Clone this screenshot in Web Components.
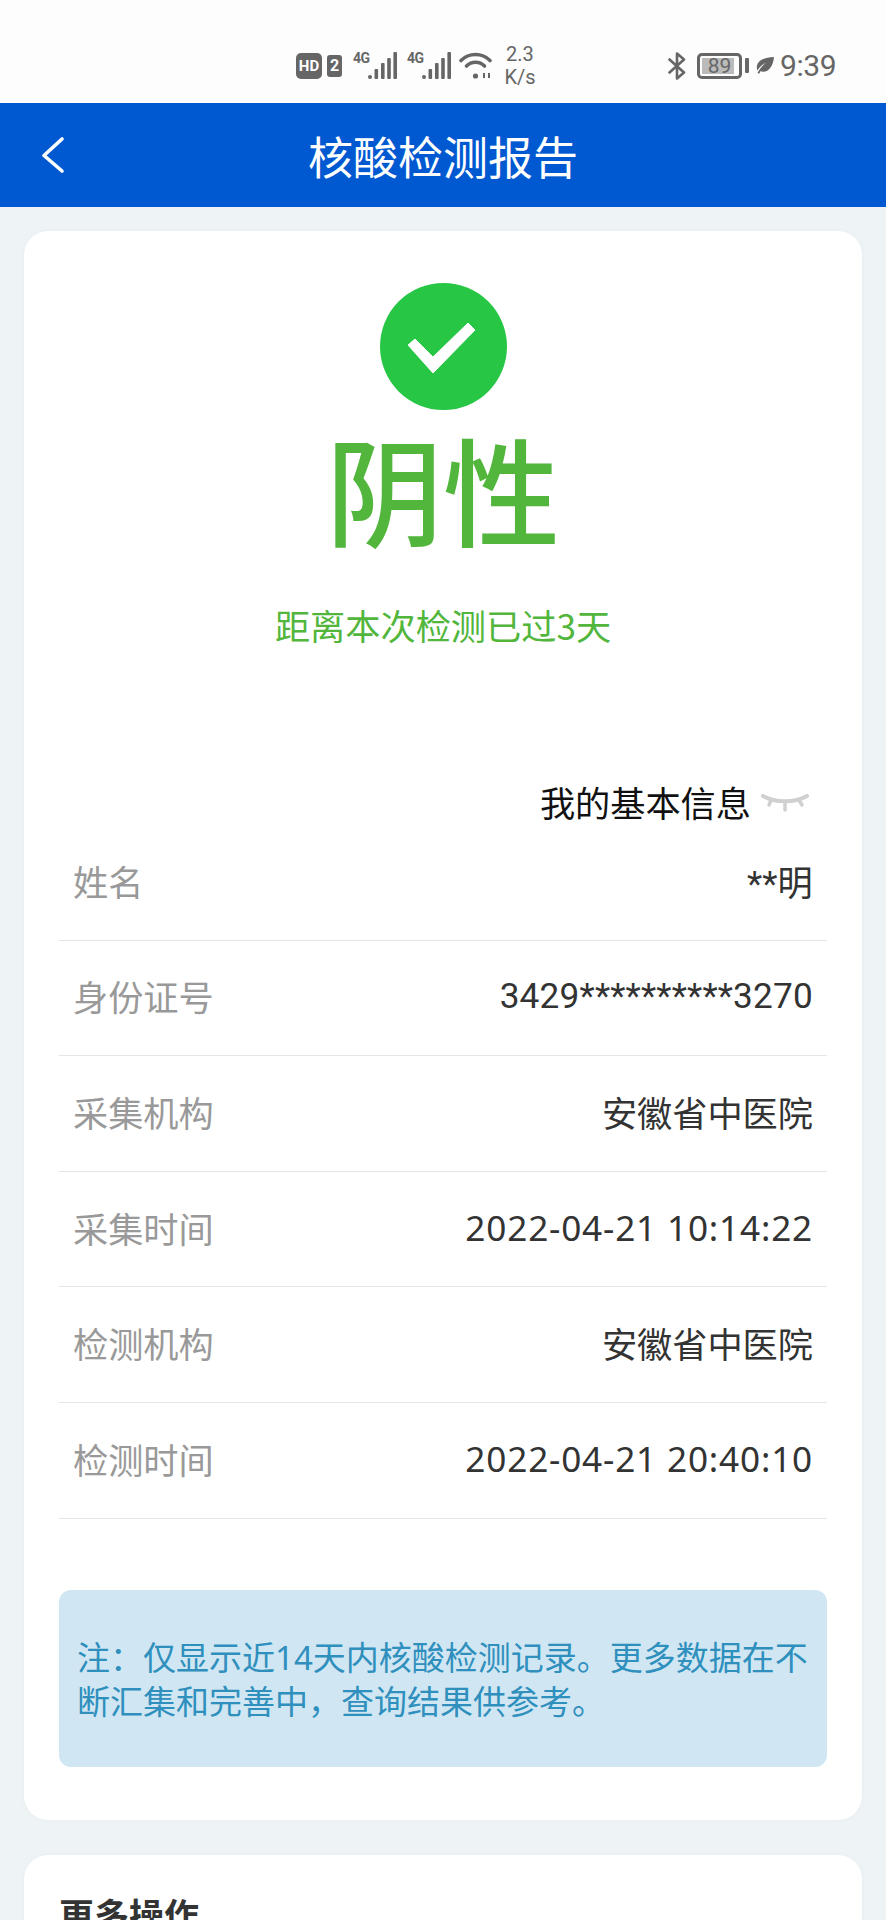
<!DOCTYPE html>
<html lang="zh-CN">
<head>
<meta charset="utf-8">
<title>核酸检测报告</title>
<style>
    html, body { margin: 0; height: 1920px; overflow: hidden; }
    body {
        background: #eef3f6;
        font-family: "Noto Sans", "Noto Sans CJK SC", sans-serif;
    }
    main { display: block; box-sizing: border-box; height: 1713px; padding: 24px 24px 0; overflow: hidden; }
</style>
</head>
<body>
<status-bar></status-bar>
<app-header>核酸检测报告</app-header>
<main>
    <content-card>
        <result-panel since="距离本次检测已过3天">阴性</result-panel>
        <info-toggle>我的基本信息</info-toggle>
        <info-row label="姓名" narrow>**明</info-row>
        <info-row label="身份证号" narrow>3429**********3270</info-row>
        <info-row label="采集机构">安徽省中医院</info-row>
        <info-row label="采集时间" spaced>2022-04-21 10:14:22</info-row>
        <info-row label="检测机构">安徽省中医院</info-row>
        <info-row label="检测时间" spaced>2022-04-21 20:40:10</info-row>
        <note-box>注：仅显示近14天内核酸检测记录。更多数据在不断汇集和完善中，查询结果供参考。</note-box>
    </content-card>
    <content-card heading="更多操作"></content-card>
</main>

<script>
class StatusBar extends HTMLElement {
    constructor() {
        super();
        this.attachShadow({ mode: 'open' });
        const bars = `<svg class="bars" width="29" height="27" viewBox="0 0 29 27" fill="#666">
            <circle cx="2" cy="25" r="2"/><rect x="6.5" y="17" width="3.6" height="10" rx="1"/>
            <rect x="13" y="11" width="3.6" height="16" rx="1"/><rect x="19.2" y="6" width="3.6" height="21" rx="1"/>
            <rect x="25.4" y="0" width="3.6" height="27" rx="1"/></svg>`;
        this.shadowRoot.innerHTML = `
            <style>
                :host { display: flex; align-items: center; box-sizing: border-box; height: 103px; padding: 28px 0 0 296px; background: #fdfdfd; color: #666; font-family: "Roboto", sans-serif; }
                .hd { width: 26px; height: 26px; border-radius: 5px; background: #666; color: #fff; font: 700 15px/26px "Roboto", sans-serif; text-align: center; }
                .sim { width: 15px; height: 22px; margin-left: 5px; border-radius: 3px; background: #666; color: #fff; font: 700 16px/22px "Roboto", sans-serif; text-align: center; }
                .net { display: flex; height: 27px; }
                .net span { width: 15px; font: 700 14px/12px "Roboto", sans-serif; letter-spacing: -.5px; white-space: nowrap; }
                .first { margin-left: 11px; }
                .second { margin-left: 10px; }
                .wifi { margin-left: 8px; }
                .speed { width: 32px; margin-left: 12px; font-size: 20px; line-height: 23px; text-align: center; }
                .bt { margin-left: 132px; }
                .battery { position: relative; box-sizing: border-box; width: 45px; height: 26px; margin-left: 11px; border: 3px solid #666; border-radius: 5px; font-size: 21px; line-height: 20px; text-align: center; }
                .battery i { position: absolute; left: 2px; top: 2px; width: 32px; height: 16px; background: #bbb; }
                .battery b { position: relative; font-weight: 400; }
                .tip { width: 4px; height: 15px; margin-left: 3px; background: #666; border-radius: 1px; }
                .leaf { margin-left: 7px; }
                .time { margin-left: 6px; font-size: 30px; letter-spacing: -.4px; }
            </style>
            <div class="hd">HD</div>
            <div class="sim">2</div>
            <div class="net first"><span>4G</span>${bars}</div>
            <div class="net second"><span>4G</span>${bars}</div>
            <svg class="wifi" width="33" height="27" viewBox="0 0 33 27" fill="none" stroke="#666" stroke-width="3.6" stroke-linecap="round">
                <path d="M2 8.500C10 .5 23 .5 31 8.500"/><path d="M7.500 14C12.500 9 20.500 9 25.500 14"/>
                <circle cx="16.500" cy="24" r="2.600" fill="#666" stroke="none"/><path d="M25 21v5M30 21v5" stroke-width="2" stroke-linecap="butt"/>
            </svg>
            <div class="speed">2.3<br>K/s</div>
            <svg class="bt" width="18" height="28" viewBox="0 0 18 28" fill="none" stroke="#666" stroke-width="2.6" stroke-linejoin="round" stroke-linecap="round">
                <path d="M1.500 7.500 16 20.500 9 26.500V1.500L16 7.500 1.500 20.500"/>
            </svg>
            <div class="battery"><i></i><b>89</b></div>
            <div class="tip"></div>
            <svg class="leaf" width="18" height="17" viewBox="0 0 18 17" fill="#666"><path d="M18 0C10 .5 1.500 2 .8 10c-.1 1.500.2 2.600.7 3.400C4 9.500 7 7 10.500 5.500 7 8 4 11 1.500 16l1.700.8 1.200-2.500C12 16.500 17 10 18 0Z"/></svg>
            <div class="time">9:39</div>
        `;
    }
}

class AppHeader extends HTMLElement {
    constructor() {
        super();
        this.attachShadow({ mode: 'open' });
        this.shadowRoot.innerHTML = `
            <style>
                :host { display: flex; align-items: center; justify-content: center; position: relative; height: 104px; background: #0059d1; color: #fff; font: 400 45px "Noto Sans CJK SC", sans-serif; }
                svg { position: absolute; left: 41px; top: 33px; }
            </style>
            <svg width="24" height="38" viewBox="0 0 24 38" fill="none" stroke="#fff" stroke-width="3.6" stroke-linecap="round" stroke-linejoin="round"><path d="M21 3 3 19.500 21 35"/></svg>
            <slot></slot>
        `;
    }
}

class ContentCard extends HTMLElement {
    constructor() {
        super();
        this.attachShadow({ mode: 'open' });
        this.shadowRoot.innerHTML = `
            <style>
                :host { display: block; box-sizing: border-box; padding: 0 35px 53px; margin-bottom: 35px; background: #fff; border-radius: 24px; box-shadow: 0 0 6px rgba(0, 0, 0, .03); }
                h2 { margin: 0; padding-top: 35px; font: 700 35px/48px "Noto Sans CJK SC", sans-serif; color: #333; }
                h2:empty { display: none; }
            </style>
            <h2></h2>
            <slot></slot>
        `;
    }
    connectedCallback() {
        this.shadowRoot.querySelector('h2').textContent = this.getAttribute('heading') || '';
    }
}

class ResultPanel extends HTMLElement {
    constructor() {
        super();
        this.attachShadow({ mode: 'open' });
        this.shadowRoot.innerHTML = `
            <style>
                :host { display: flex; flex-direction: column; align-items: center; padding-top: 52px; color: #52b63c; font-family: "Noto Sans CJK SC", sans-serif; }
                svg { display: block; }
                .result { margin-top: 3px; font-size: 117px; font-weight: 500; line-height: 148px; }
                .since { margin-top: 41px; font-size: 35.2px; line-height: 46px; }
            </style>
            <svg width="127" height="127" viewBox="0 0 127 127">
                <circle cx="63.500" cy="63.500" r="63.500" fill="#27c644"/>
                <path d="M28 62 35 56 53 74 88 40 95 47 53 90Z" fill="#fff" stroke="#fff" stroke-width="1" stroke-linejoin="round"/>
            </svg>
            <div class="result"><slot></slot></div>
            <div class="since"></div>
        `;
    }
    connectedCallback() {
        this.shadowRoot.querySelector('.since').textContent = this.getAttribute('since');
    }
}

class InfoToggle extends HTMLElement {
    constructor() {
        super();
        this.attachShadow({ mode: 'open' });
        this.shadowRoot.innerHTML = `
            <style>
                :host { display: flex; justify-content: flex-end; align-items: center; gap: 10px; margin-top: 131px; padding-right: 18px; height: 46px; color: #111; font: 35.2px/46px "Noto Sans CJK SC", sans-serif; }
                svg { margin-top: 2px; }
            </style>
            <slot></slot>
            <svg width="48" height="18" viewBox="0 0 48 18" fill="none" stroke="#d0d0d0" stroke-width="3.5" stroke-linecap="round">
                <path d="M2 2C14 9 34 9 46 2" stroke-width="4"/><path d="M10 6 8 11M24 8v8M38 6l3 5"/>
            </svg>
        `;
    }
}

class InfoRow extends HTMLElement {
    constructor() {
        super();
        this.attachShadow({ mode: 'open' });
        this.shadowRoot.innerHTML = `
            <style>
                :host { display: flex; justify-content: space-between; align-items: center; box-sizing: border-box; height: 115.600px; padding: 0 14px 4px; border-bottom: 1px solid #e6e6e6; font-size: 35.200px; }
                :host([narrow]) { font-family: "Roboto", "Noto Sans CJK SC", sans-serif; letter-spacing: .2px; }
                :host([spaced]) { letter-spacing: .8px; }
                .label { color: #999; font-family: "Noto Sans CJK SC", sans-serif; letter-spacing: 0; }
                .value { color: #333; }
            </style>
            <span class="label"></span>
            <span class="value"><slot></slot></span>
        `;
    }
    connectedCallback() {
        this.shadowRoot.querySelector('.label').textContent = this.getAttribute('label');
    }
}

class NoteBox extends HTMLElement {
    constructor() {
        super();
        this.attachShadow({ mode: 'open' });
        this.shadowRoot.innerHTML = `
            <style>
                :host { display: block; box-sizing: border-box; height: 177px; margin-top: 71px; padding: 46px 18px 0; background: #d0e7f3; border-radius: 12px; color: #2f8fbd; font-size: 33px; line-height: 44.500px; }
            </style>
            <slot></slot>
        `;
    }
}

customElements.define('status-bar', StatusBar);
customElements.define('app-header', AppHeader);
customElements.define('content-card', ContentCard);
customElements.define('result-panel', ResultPanel);
customElements.define('info-toggle', InfoToggle);
customElements.define('info-row', InfoRow);
customElements.define('note-box', NoteBox);
</script>
</body>
</html>
